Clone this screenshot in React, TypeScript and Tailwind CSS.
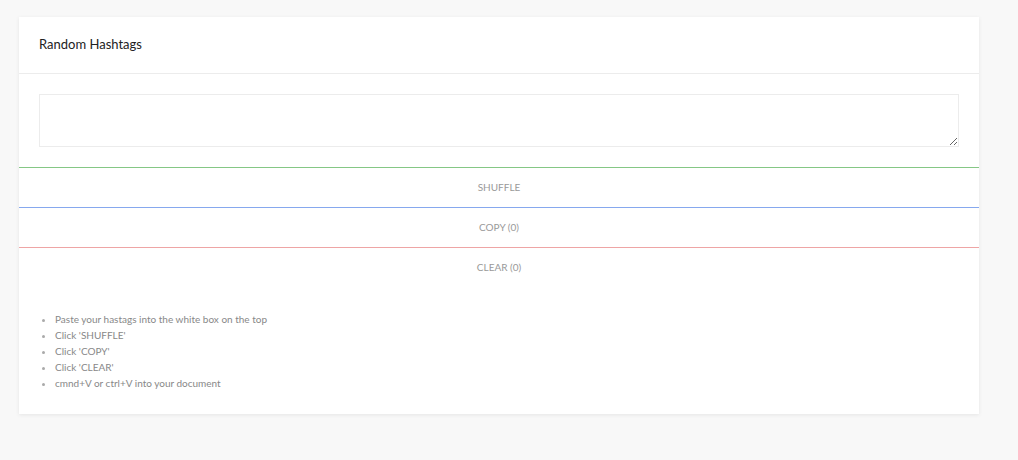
import { useState } from "react";

const steps = [
  "Paste your hastags into the white box on the top",
  "Click 'SHUFFLE'",
  "Click 'COPY'",
  "Click 'CLEAR'",
  "cmnd+V or ctrl+V into your document",
];

export default function App() {
  const [text, setText] = useState("");
  const count = text.split(/\s+/).filter((t) => t.startsWith("#")).length;

  const shuffle = () => {
    const tags = text.split(/\s+/).filter(Boolean);
    for (let i = tags.length - 1; i > 0; i--) {
      const j = Math.floor(Math.random() * (i + 1));
      [tags[i], tags[j]] = [tags[j], tags[i]];
    }
    setText(tags.join(" "));
  };

  return (
    <div
      className="min-h-[460px] bg-[#f8f8f8] pt-[17px] pl-[19px]"
      style={{ fontFamily: "Lato, 'Open Sans', sans-serif" }}
    >
      <div className="w-[960px] bg-white shadow-[0_1px_4px_rgba(0,0,0,0.08)]">
        <div className="flex h-[57px] items-center border-b border-[#ececec] px-5">
          <h2 className="text-[13px] text-[#222]">Random Hashtags</h2>
        </div>

        <div className="p-5">
          <textarea
            value={text}
            onChange={(e) => setText(e.target.value)}
            className="block h-[53px] w-full border border-[#ececec] p-2 text-[12px] outline-none"
          />
        </div>

        <button
          onClick={shuffle}
          className="block h-10 w-full border-t border-[#85c785] text-[10px] uppercase text-[#999]"
        >
          Shuffle
        </button>
        <button
          onClick={() => navigator.clipboard?.writeText(text)}
          className="block h-10 w-full border-t border-[#86a8ee] text-[10px] uppercase text-[#999]"
        >
          Copy ({count})
        </button>
        <button
          onClick={() => setText("")}
          className="block h-10 w-full border-t border-[#eea5a5] text-[10px] uppercase text-[#999]"
        >
          Clear ({count})
        </button>

        <ul className="list-disc pt-6 pr-5 pb-[23px] pl-9 text-[10px] leading-4 text-[#888] marker:text-[#aaa]">
          {steps.map((s) => (
            <li key={s}>{s}</li>
          ))}
        </ul>
      </div>
    </div>
  );
}
